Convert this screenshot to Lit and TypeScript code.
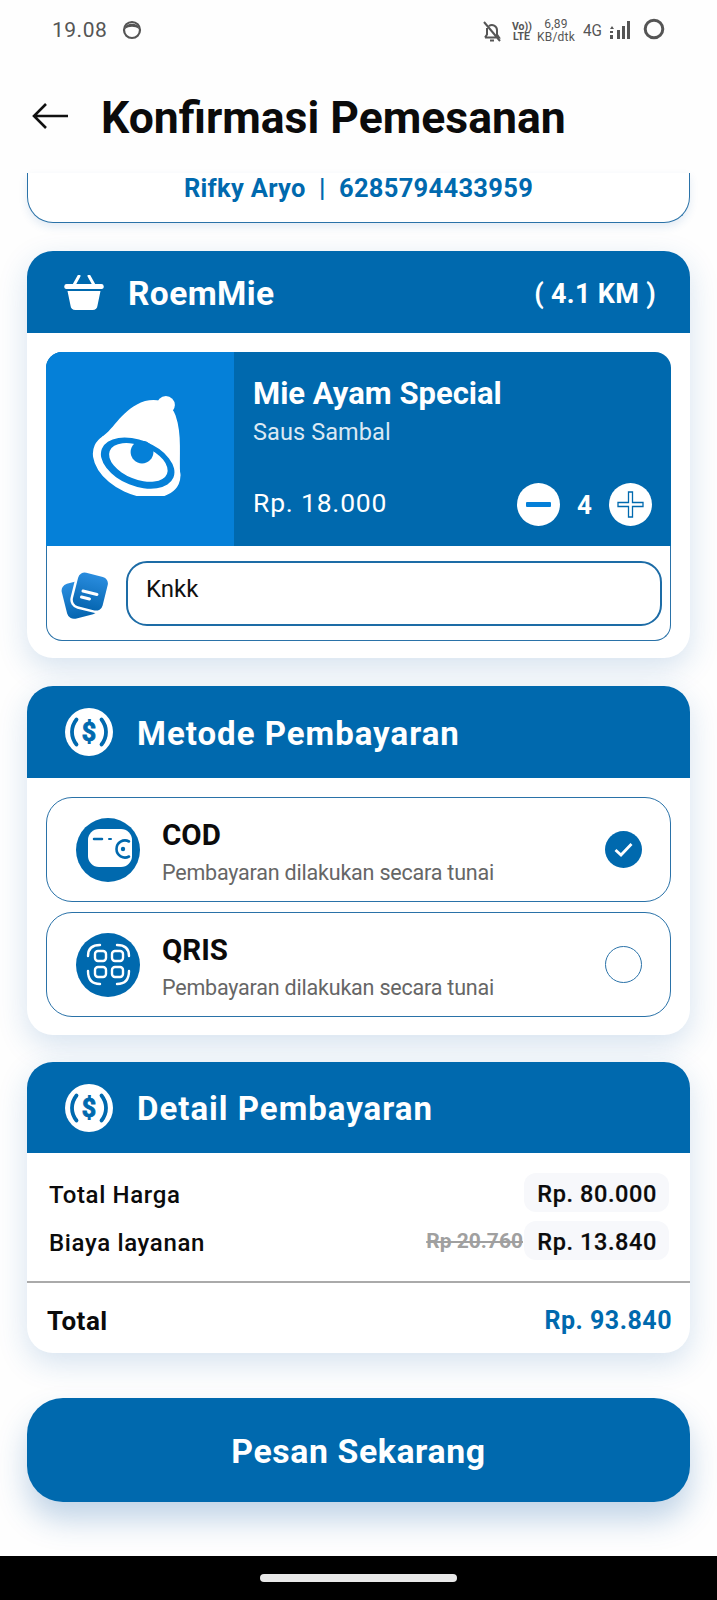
import { LitElement, html, css } from "lit";
import { customElement } from "lit/decorators.js";

const dollar = html`<svg class="dollar" viewBox="0 0 48 48">
  <circle cx="24" cy="24" r="24" fill="#fff"/>
  <path d="M11.500 11.500C5.500 19 5.500 29 11.500 36.500M36.500 11.500C42.500 19 42.500 29 36.500 36.500" fill="none" stroke="#0069ae" stroke-width="3.800" stroke-linecap="round"/>
  <text x="24" y="32.500" text-anchor="middle" class="dsign">$</text>
</svg>`;

@customElement("app-root")
export class AppRoot extends LitElement {
  static styles = css`
    :host { display: flex; flex-direction: column; width: 717px; height: 1600px; overflow: hidden; background: #fefefe; font-family: Roboto, "Noto Sans", sans-serif; color: #0b0b0b; }
    .status { height: 68px; flex: none; display: flex; align-items: flex-start; padding: 20px 0 0 52px; box-sizing: border-box; color: #555; }
    .time { font-size: 21px; line-height: 20px; letter-spacing: .5px; }
    .face { width: 20px; height: 20px; margin: 0 0 0 15px; }
    .right { margin-left: auto; display: flex; align-items: flex-start; padding-right: 52px; }
    .bell { width: 22px; height: 24px; }
    .volte { margin-left: 9px; font-size: 10.500px; line-height: 10px; font-weight: 700; text-align: center; margin-top: 2px; width: 19px; }
    .speed { margin-left: 6px; font-size: 12px; line-height: 12px; text-align: center; width: 38px; margin-top: -2px; letter-spacing: .2px; }
    .speed div + div { margin-top: 1px; }
    .g4 { margin-left: 8px; font-size: 17px; line-height: 18px; width: 20px; margin-top: 1px; transform: scaleX(.9); transform-origin: left; }
    .signal { width: 22px; height: 20px; margin-left: 6px; }
    .ring { width: 22px; height: 22px; margin-left: 12px; margin-top: -2px; }

    .appbar { height: 105px; flex: none; display: flex; align-items: flex-start; padding-left: 32px; box-sizing: border-box; }
    .arrow { width: 37px; height: 26px; margin-top: 35px; flex: none; }
    .title { margin: 26px 0 0 32px; font-size: 44.500px; line-height: 48px; font-weight: 700; white-space: nowrap; }

    .content { flex: 1; display: flex; flex-direction: column; padding: 0 27px; }
    .customer { height: 50px; box-sizing: border-box; border: 1px solid #2a72a8; border-top: none; border-radius: 0 0 26px 26px; display: flex; justify-content: center; color: #0069ae; font-size: 25.500px; line-height: 30px; font-weight: 700; box-shadow: 0 4px 8px rgba(30,100,170,.12); background: #fff; white-space: pre; letter-spacing: .3px; flex: none; }

    .card { background: #fff; border-radius: 26px; box-shadow: 0 10px 30px rgba(30,100,170,.18); overflow: hidden; flex: none; }
    .c1 { margin-top: 28px; }
    .c2 { margin-top: 28px; }
    .c3 { margin-top: 27px; }
    .head { background: #0069ae; color: #fff; display: flex; align-items: center; font-weight: 700; font-size: 33px; box-sizing: border-box; }
    .h1 { height: 82px; padding: 0 34px 0 37px; }
    .h1 .name { margin-left: 24px; letter-spacing: .4px; font-size: 33.500px; padding-top: 2px; }
    .h1 .km { margin-left: auto; font-size: 27px; letter-spacing: .3px; white-space: pre; padding-top: 4px; }
    .basket { width: 40px; height: 35px; }
    .h2 { height: 92px; padding-left: 38px; }
    .h3 { height: 91px; padding-left: 38px; }
    .h2 .t, .h3 .t { margin-left: 24px; letter-spacing: 1px; padding-top: 2px; }
    .dollar { width: 48px; height: 48px; flex: none; }
    .dsign { font: 700 25px Roboto, sans-serif; fill: #0069ae; stroke: #0069ae; stroke-width: .9px; }

    .body1 { padding: 19px 19px 17px; }
    .item-top { height: 194px; display: flex; background: #0069ae; color: #fff; border-radius: 16px 16px 0 0; overflow: hidden; }
    .thumb { width: 188px; flex: none; background: #0580d8; display: flex; align-items: center; justify-content: center; }
    .thumb svg { width: 92px; height: 100px; margin: -6px 5px 0 0; }
    .info { flex: 1; padding: 22px 19px 0 19px; display: flex; flex-direction: column; }
    .iname { font-size: 31px; line-height: 40px; font-weight: 700; }
    .isub { font-size: 23.500px; line-height: 30px; color: #dbe8f3; margin-top: 3px; letter-spacing: .1px; }
    .irow { display: flex; align-items: center; margin-top: 36px; }
    .price { font-size: 26.500px; letter-spacing: .8px; margin-top: -4px; }
    .qty { margin-left: auto; display: flex; align-items: center; }
    .qbtn { width: 43px; height: 43px; display: block; }
    .qn { width: 49px; text-align: center; font-size: 26px; font-weight: 700; }
    .note { display: flex; align-items: flex-start; padding: 15px 8px 0 14px; height: 95px; box-sizing: border-box; border: 1px solid #2a72a8; border-top: none; border-radius: 0 0 16px 16px; }
    .noteicon { width: 48px; height: 50px; margin-top: 9px; flex: none; }
    .input { flex: 1; margin-left: 17px; height: 65px; box-sizing: border-box; border: 2px solid #1d6ca6; border-radius: 21px; padding: 11px 18px; font-size: 24px; line-height: 30px; color: #111; }

    .body2 { padding: 19px 19px 18px; display: flex; flex-direction: column; gap: 10px; }
    .opt { height: 105px; box-sizing: border-box; border: 1.500px solid #2a72a8; border-radius: 26px; display: flex; align-items: center; padding: 0 29px 0 29px; }
    .oicon { width: 64px; height: 64px; flex: none; }
    .otext { margin: 6px 0 0 22px; }
    .oname { font-size: 29.500px; line-height: 34px; font-weight: 700; color: #0b0b0b; }
    .odesc { font-size: 21.500px; line-height: 30px; color: #666; margin-top: 6px; letter-spacing: -.2px; }
    .check { margin-left: auto; width: 37px; height: 37px; flex: none; margin-right: -1px; }

    .row { display: flex; align-items: center; justify-content: space-between; height: 39px; padding: 0 21px 0 22px; }
    .rows { padding: 20px 0 0; display: flex; flex-direction: column; gap: 9px; }
    .rl { font-size: 24px; font-weight: 500; letter-spacing: .65px; padding-top: 5px; }
    .rr { display: flex; align-items: center; }
    .old { font-size: 21px; font-weight: 700; color: #a0a0a0; text-decoration: line-through; margin-right: 1px; }
    .pill { background: #f7f8fb; border-radius: 12px; height: 39px; width: 145px; box-sizing: border-box; padding-right: 12px; text-align: right; line-height: 43px; font-size: 23.500px; font-weight: 500; letter-spacing: .6px; -webkit-text-stroke: .2px #111; }
    .divider { height: 2px; background: #aaa; margin-top: 21px; }
    .totalrow { display: flex; justify-content: space-between; align-items: center; height: 70px; padding: 5px 18px 0 20px; box-sizing: border-box; font-size: 26px; font-weight: 700; letter-spacing: .5px; }
    .totalrow .v { color: #0069ae; font-size: 25px; }

    .cta { flex: none; margin-top: 45px; height: 104px; border-radius: 36px; background: #0069ae; color: #fff; display: flex; align-items: center; justify-content: center; font-size: 33.800px; font-weight: 700; letter-spacing: .6px; padding-top: 3px; box-sizing: border-box; box-shadow: 0 18px 30px rgba(30,100,170,.27); }
    .nav { flex: none; height: 44px; background: #000; display: flex; justify-content: center; padding-top: 18px; box-sizing: border-box; }
    .nav div { width: 197px; height: 8px; border-radius: 4px; background: #e8e8e8; }
  `;

  render() {
    return html`
      <div class="status">
        <span class="time">19.08</span>
        <svg class="face" viewBox="0 0 20 20"><circle cx="10" cy="10" r="8" fill="none" stroke="#555" stroke-width="2.200"/><path d="M3 9C3 2 17 2 17 9C13 6 7 6 3 9Z" fill="#555"/></svg>
        <div class="right">
          <svg class="bell" viewBox="0 0 22 24"><path d="M4 17.500h14l-2-3V10a5 5 0 0 0-8-4M6 8v6.500l-2 3M9 20.500h4M3 2l16 19" fill="none" stroke="#555" stroke-width="2"/></svg>
          <div class="volte"><div>Vo))</div><div>LTE</div></div>
          <div class="speed"><div>6,89</div><div>KB/dtk</div></div>
          <div class="g4">4G</div>
          <svg class="signal" viewBox="0 0 22 20"><path d="M1 9l2-3 2 3zM1 11h3v2H1zM1 15h3v4H1z" fill="#555"/><rect x="8" y="10" width="3" height="9" fill="#555"/><rect x="13" y="6" width="3" height="13" fill="#555"/><rect x="18" y="1" width="3" height="18" fill="#555"/></svg>
          <svg class="ring" viewBox="0 0 22 22"><circle cx="11" cy="11" r="8.800" fill="none" stroke="#555" stroke-width="3"/></svg>
        </div>
      </div>

      <div class="appbar">
        <svg class="arrow" viewBox="0 0 37 26"><path d="M36 13H2M14 1L2 13l12 12" fill="none" stroke="#111" stroke-width="2.600"/></svg>
        <div class="title">Konfirmasi Pemesanan</div>
      </div>

      <div class="content">
        <div class="customer"><span>Rifky Aryo</span><span>  |  </span><span>6285794433959</span></div>

        <section class="card c1">
          <div class="head h1">
            <svg class="basket" viewBox="0 0 40 35"><path d="M10 10L15 1M30 10L25 1" fill="none" stroke="#fff" stroke-width="3" stroke-linecap="round"/><path d="M3 9h34a2.500 2.500 0 0 1 .5 5H2.500a2.500 2.500 0 0 1 .5-5Z" fill="#fff"/><path d="M3.500 16h33l-3 14.500a5 5 0 0 1-5 4.500h-17a5 5 0 0 1-5-4.500Z" fill="#fff"/></svg>
            <span class="name">RoemMie</span>
            <span class="km">( 4.1 KM )</span>
          </div>
          <div class="body1">
            <div class="item-top">
              <div class="thumb">
                <svg viewBox="218 467 272 298">
                  <circle cx="437" cy="494" r="27" fill="#fff"/>
                  <path d="M245 590C285 565 305 505 375 482C415 472 452 485 466 525C486 580 476 650 480 705L350 680Z" fill="#fff"/>
                  <ellipse cx="350" cy="672" rx="138" ry="88" transform="rotate(25 350 672)" fill="#fff"/>
                  <ellipse cx="353" cy="667" rx="115" ry="68" transform="rotate(22 353 667)" fill="#0580d8"/>
                  <ellipse cx="355" cy="665" rx="92" ry="50" transform="rotate(22 355 665)" fill="#fff"/>
                  <circle cx="366" cy="634" r="34" fill="#0580d8"/>
                </svg>
              </div>
              <div class="info">
                <div class="iname">Mie Ayam Special</div>
                <div class="isub">Saus Sambal</div>
                <div class="irow">
                  <span class="price">Rp. 18.000</span>
                  <div class="qty">
                    <svg class="qbtn" viewBox="0 0 43 43"><circle cx="21.500" cy="21.500" r="21.500" fill="#fff"/><rect x="9" y="19" width="25" height="5" rx="1" fill="#0580d8"/></svg>
                    <span class="qn">4</span>
                    <svg class="qbtn" viewBox="0 0 43 43"><circle cx="21.500" cy="21.500" r="21.500" fill="#fff"/><path d="M19.500 9h4v10.500H34v4H23.500V34h-4V23.500H9v-4h10.500Z" fill="#fff" stroke="#0069ae" stroke-width="1.300"/></svg>
                  </div>
                </div>
              </div>
            </div>
            <div class="note">
              <svg class="noteicon" viewBox="0 0 48 50">
                <defs><linearGradient id="g" x1="0" y1="0" x2="0" y2="1"><stop offset="0" stop-color="#2b8ee0"/><stop offset="1" stop-color="#0565b0"/></linearGradient></defs>
                <rect x="3" y="11" width="32" height="36" rx="7" transform="rotate(-14 19 29)" fill="url(#g)"/>
                <rect x="13" y="3" width="33" height="37" rx="8" transform="rotate(14 29 21)" fill="url(#g)" stroke="#fff" stroke-width="2.500"/>
                <path d="M22 21l14 3.500M20.500 27l8 2" stroke="#fff" stroke-width="3" stroke-linecap="round"/>
              </svg>
              <div class="input">Knkk</div>
            </div>
          </div>
        </section>

        <section class="card c2">
          <div class="head h2">${dollar}<span class="t">Metode Pembayaran</span></div>
          <div class="body2">
            <div class="opt">
              <svg class="oicon" viewBox="0 0 64 64"><circle cx="32" cy="32" r="32" fill="#0069ae"/>
                <rect x="12" y="11" width="44" height="38" rx="11" fill="#fff"/>
                <path d="M18 21h8" stroke="#0069ae" stroke-width="2.500" stroke-linecap="round"/>
                <path d="M33 21h2" stroke="#0069ae" stroke-width="2" stroke-linecap="round"/>
                <path d="M53 23.500a8.500 8.500 0 1 0 0 15" fill="none" stroke="#0069ae" stroke-width="2.600" stroke-linecap="round"/>
                <circle cx="47" cy="31" r="2.200" fill="#0069ae"/>
              </svg>
              <div class="otext"><div class="oname">COD</div><div class="odesc">Pembayaran dilakukan secara tunai</div></div>
              <svg class="check" viewBox="0 0 37 37"><circle cx="18.500" cy="18.500" r="18.500" fill="#0069ae"/><path d="M10.500 19l5.500 5 10.500-11" fill="none" stroke="#fff" stroke-width="2.800"/></svg>
            </div>
            <div class="opt">
              <svg class="oicon" viewBox="0 0 64 64"><circle cx="32" cy="32" r="32" fill="#0069ae"/>
                <g fill="none" stroke="#fff" stroke-width="2.400" stroke-linecap="round">
                  <path d="M12 23Q12 12 24 12M41 12Q53 12 53 23M12 38Q12 51 24 51M41 51Q53 51 53 38"/>
                  <rect x="19" y="18" width="11" height="10" rx="3"/><rect x="36" y="18" width="11" height="10" rx="3"/>
                  <rect x="19" y="34" width="11" height="10" rx="3"/><rect x="36" y="34" width="11" height="10" rx="3"/>
                </g>
              </svg>
              <div class="otext"><div class="oname">QRIS</div><div class="odesc">Pembayaran dilakukan secara tunai</div></div>
              <svg class="check" viewBox="0 0 37 37"><circle cx="18.500" cy="18.500" r="18" fill="#fff" stroke="#2a72a8" stroke-width="1"/></svg>
            </div>
          </div>
        </section>

        <section class="card c3">
          <div class="head h3">${dollar}<span class="t">Detail Pembayaran</span></div>
          <div class="rows">
            <div class="row"><span class="rl">Total Harga</span><div class="rr"><span class="pill">Rp. 80.000</span></div></div>
            <div class="row"><span class="rl">Biaya layanan</span><div class="rr"><span class="old">Rp 20.760</span><span class="pill">Rp. 13.840</span></div></div>
          </div>
          <div class="divider"></div>
          <div class="totalrow"><span>Total</span><span class="v">Rp. 93.840</span></div>
        </section>

        <div class="cta">Pesan Sekarang</div>
      </div>

      <div class="nav"><div></div></div>
    `;
  }
}
